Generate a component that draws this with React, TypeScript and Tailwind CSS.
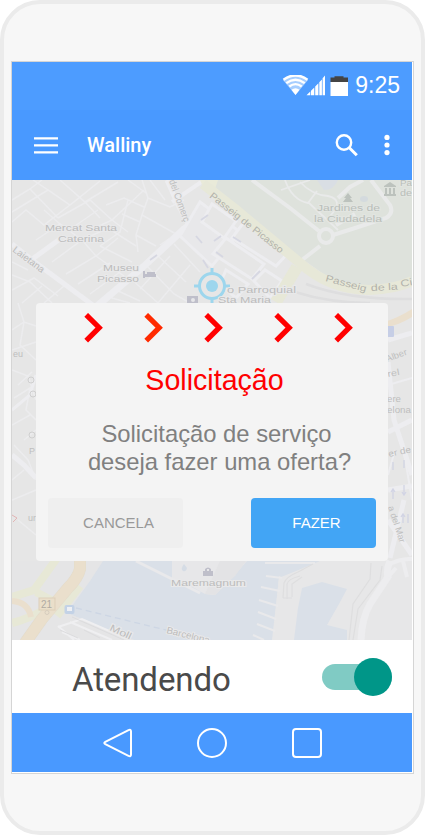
import React from "react";

const SANS = "font-['Liberation_Sans',Arial,sans-serif]";

type LabelProps = {
  x: number;
  y: number;
  w: number;
  children: string;
  angle?: number;
  size?: number;
};

function Label({ x, y, w, children, angle = 0, size = 9.6 }: LabelProps) {
  return (
    <text
      transform={`translate(${x} ${y}) rotate(${angle})`}
      textLength={w}
      lengthAdjust="spacingAndGlyphs"
      fontSize={size}
    >
      {children}
    </text>
  );
}

function CityMap() {
  return (
    <svg
      className="absolute inset-0 h-full w-full"
      viewBox="12 180 400 460"
      fontFamily="'Liberation Sans', Arial, sans-serif"
      fontSize="10"
    >
      <rect x="12" y="180" width="400" height="460" fill="#e6e6e6" />

      {/* old town side streets */}
      <g fill="none" stroke="#ececee" strokeWidth="1.5">
        <path d="M12 200L30 189L42 180M12 212L48 190L70 205L100 181M30 189L58 218M48 190L33 180M70 205L44 225L26 210L12 222M60 180L85 202L118 182M58 218L90 200L112 220L144 190M85 202L100 218M90 230L112 220L128 232" />
        <path d="M142 180L148 198L142 215L136 235L138 252M148 198L170 207L184 200M142 215L160 225L176 234M136 235L156 246M144 207L124 198L106 205M140 222L122 214M128 180L146 193M150 180L165 200M176 234L160 245M128 200L120 232L100 246" />
        <path d="M36 240L60 224L82 240L96 256L124 276M60 224L44 210M52 262L82 240L108 228L136 246M66 274L96 256L118 238M78 284L110 263M90 294L120 272M72 228L98 210M100 246L132 262" />
        <path d="M12 275L30 282L52 303M12 290L34 278L58 296M22 303L42 286M44 303L64 286M12 262L28 270" />
        <path d="M108 297L130 303M116 290L140 301M130 278L158 303M146 265L174 294L190 303M158 256L186 282M174 244L200 272M158 303L190 265M140 289L170 256" />
        <path d="M12 330L24 322L36 326M18 303L24 322L20 345L36 360M12 350L36 342M12 370L28 376L36 400M18 385L32 372M14 398L30 388L26 410L36 420M12 425L30 415M24 440L36 430M14 445L28 460L36 480M12 480L24 470M12 500L36 490M18 520L36 535" />
      </g>
      <g fill="none" stroke="#ededf0" strokeWidth="5">
        <path d="M12 244L32 260L94 306M31 260L60 239" />
        <path d="M97 306L143 267L184 229L213 209" strokeWidth="7" />
        <path d="M167 180L178 205L190 227L215 254" strokeWidth="5" />
        <path d="M172 202L204 180" strokeWidth="4" />
        <path d="M12 410L30 395L36 375" strokeWidth="3" />
        <path d="M12 455L24 465L36 478" />
      </g>

      {/* park */}
      <path d="M203 180H412V280C385 293 350 291 325 275L270 236L212 193Z" fill="#dee2dc" />
      <g fill="none" stroke="#e9eaea" strokeWidth="3">
        <path d="M252 180L290 208L319 231M302 260L320 246M333 235L352 229L386 218Q394 213 390 205L371 180M336 225L355 214M338 198L350 187L363 180" strokeWidth="4" />
        <path d="M285 180Q292 200 308 203L317 191M300 182Q312 195 328 196Q345 200 330 216M309 203L338 230M281 190L310 180" strokeWidth="1.8" />
        <circle cx="326" cy="236" r="7" strokeWidth="4" />
      </g>
      <path d="M317 180H338Q334 190 324 190Z" fill="#d9dee4" />
      <ellipse cx="364" cy="199" rx="4" ry="3" fill="#d4dade" />

      {/* eastern city blocks */}
      <g fill="#e6e6e6" stroke="#ededf0" strokeWidth="3">
        <path d="M200 202L240 232L212 266L180 236Z" fill="#e8e8ea" />
        <path d="M226 238L264 264L252 279L213 254Z" />
        <path d="M244 222L289 252L276 266L232 238Z" />
        <path d="M212 204L236 221L224 238L202 222Z" />
        <path d="M226 270L248 284L236 298L220 284Z" />
        <path d="M254 281L265 270L282 281L270 298Z" />
      </g>
      <g stroke="#d6d7e2" strokeWidth="1.8" fill="none">
        <path d="M150 260L157 255M201 220L208 215M196 236L202 243M203 260L208 268M216 252L223 257M233 237L241 242M252 279L260 271M214 241L221 236" />
      </g>
      <path d="M200 180H218L214 192L203 187Z" fill="#e9ead9" />
      <g fill="none" stroke="#e7e8d8">
        <path d="M203 184L235 209L300 263Q330 290 370 290Q396 289 412 281" strokeWidth="10" />
        <path d="M297 267L276 302" strokeWidth="12" />
      </g>
      <g fill="none" stroke="#dededf" strokeWidth="2.5">
        <path d="M295 292Q330 303 370 303M306 284Q348 300 412 299" />
      </g>

      {/* eastern edge */}
      <path d="M384 322Q398 318 412 309V317Q399 325 387 327Z" fill="#eadfcd" />
      <g stroke="#ededf0" strokeWidth="5" fill="none">
        <path d="M388 340L412 333M388 362L394 420L412 475M388 432L412 420M388 490L412 486M388 520L412 555M404 500L390 558" />
        <path d="M388 385L412 378M395 450L388 475M402 440L412 500" strokeWidth="2" />
      </g>
      <rect x="386" y="326" width="8" height="11" rx="1" fill="#c6cee6" />
      <g stroke="#d2d4e4" strokeWidth="1.3" fill="none">
        <path d="M393 462V470M404 460V468M393 489V499M391 492L393 489L395 492M404 485V495M402 492L404 495L406 492M403 514V523M408 514V523M401 517L403 514L405 517" />
      </g>

      {/* harbour */}
      <path d="M100 561H296L279 576L273 640H134L66 613Q74 600 80 590Z" fill="#dae0e8" />
      <path d="M172 561H247L233 577L215 595L205 594L187 584L172 580Z" fill="#e7e7e9" />
      <path d="M215 595L235 576L246 561H220L205 594Z" fill="#e3e3e5" />
      <path d="M136 561L200 593" stroke="#e9e9eb" strokeWidth="3" fill="none" />
      <path d="M296 561H412V640H272L279 578L296 568Z" fill="#e7e7e8" />
      <path d="M302 588L322 582L347 589L339 604L327 625L347 630V640H294L298 608Z" fill="#dae0e8" />
      <path d="M265 561H320L296 571L281 577L276 573Z" fill="#dae0e8" />
      <g stroke="#e9e9eb" strokeWidth="2" fill="none">
        <path d="M266 576L282 578M261 587L280 591M259 600L278 606M258 612L276 619M257 624L275 631M253 635L264 640M265 563H315" />
      </g>
      <g stroke="#dededf" strokeWidth="1.2" fill="none">
        <path d="M283 598L284 583Q286 577 298 572L313 564M287 599V584Q288 579 300 576M292 597V584L302 577M283 598H292M371 563L370 579L353 604L349 640M382 566L380 580L358 609L353 640" />
      </g>
      <g stroke="#ededef" fill="none">
        <path d="M390 561Q386 570 388 577L370 604Q362 618 361 640" strokeWidth="7" />
        <path d="M386 566Q400 558 412 559M403 561L407 577M388 577L396 568" strokeWidth="4" />
      </g>
      <path d="M12 561H103L90 581L67 613L134 640H12Z" fill="#e5e5e6" />
      <g fill="none">
        <path d="M60 554L34 590L12 597M36 592L51 600M12 623Q28 619 44 610L50 600M80 586L57 616" stroke="#e7e8d6" strokeWidth="8" />
        <path d="M12 601Q28 602 31 617" stroke="#eadfcd" strokeWidth="6" />
        <path d="M80 558V569Q78 578 68 588L42 619L25 643" stroke="#e3dccb" strokeWidth="12" />
        <path d="M80 558V569Q78 578 68 588L42 619L25 643" stroke="#eadfcc" strokeWidth="11" />
        <path d="M58 626L74 640M58 627L82 619L130 640M70 622L112 640M62 632L80 640" stroke="#efeff1" strokeWidth="2" />
        <path d="M60 630L78 638M72 617L124 640M84 630L100 638" stroke="#dcdcde" strokeWidth="1" />
        <path d="M76 608L170 631" stroke="#cdd6e4" strokeWidth="1.3" strokeDasharray="6 4" />
      </g>
      <rect x="39" y="598" width="16" height="12" fill="#eadfca" stroke="#ddcfb9" />
      <text x="41" y="608" fontSize="10" fill="#b0aba2">21</text>
      <circle cx="47" cy="612.5" r="2" fill="none" stroke="#d6cdbe" />
      <rect x="64.5" y="605" width="10" height="9" rx="2" fill="#c3d2e6" />
      <rect x="67" y="607" width="5" height="4" fill="#eef0f4" />

      {/* place markers */}
      <g fill="#bcc2bd">
        <path d="M348 193L352 198H350L353 202H343L346 198H344Z" />
        <path d="M384 186L390 182L396 186V187H384ZM385 188H387V194H385ZM389 188H391V194H389ZM393 188H395V194H393ZM384 194H396V196H384Z" />
      </g>
      <g fill="#bfbfca">
        <path d="M143 271H145V274H156V277H145V278H143ZM147 272H155V274H147Z" />
        <rect x="187" y="296" width="11" height="8" />
        <path d="M203 571H213V576H203ZM205 571V569Q208 566 211 569V571H209V569H207V571Z" />
        <path d="M184 564L187 568Q186 572 183 571Q180 569 184 564Z" fill="#d5dce5" />
      </g>
      <circle cx="193" cy="300" r="2" fill="#e7e7e9" />

      {/* current position */}
      <g stroke="#9dd6ed" fill="none" strokeWidth="3">
        <circle cx="212" cy="286" r="12.5" fill="#e6e6e6" />
        <path d="M212 268V274M212 298V305M194 286H200M224 286H230" />
        <circle cx="212" cy="286" r="6" fill="#9dd6ed" stroke="none" />
      </g>

      {/* labels */}
      <g fill="#bcbcbc" stroke="#e9e9ea" strokeWidth="2" paintOrder="stroke">
        <Label x={45} y={231} w={72}>Mercat Santa</Label>
        <Label x={58} y={242} w={46}>Caterina</Label>
        <Label x={103} y={271} w={36}>Museu</Label>
        <Label x={97} y={282} w={42}>Picasso</Label>
        <Label x={12} y={251} w={37} angle={37}>Laietana</Label>
        <Label x={169} y={181} w={44} angle={70}>del Comerç</Label>
        <Label x={227} y={293} w={69}>o Parroquial</Label>
        <Label x={218} y={303} w={53}>Sta Maria</Label>
        <Label x={171} y={585.5} w={75}>Maremagnum</Label>
        <Label x={109} y={630} w={23} angle={25}>Moll</Label>
        <Label x={166} y={633} w={44} angle={14}>Barcelona</Label>
      </g>
      <g fill="#b9beb9" stroke="#e2e5e1" strokeWidth="2" paintOrder="stroke">
        <Label x={317} y={210.5} w={63}>Jardines de</Label>
        <Label x={314} y={221.5} w={68}>la Ciudadela</Label>
        <Label x={400} y={186} w={12} size={9}>Pa</Label>
        <Label x={400} y={195.5} w={12} size={9}>de</Label>
      </g>
      <g fill="#b2b2ab">
        <Label x={209} y={197} w={91} angle={38.5}>Passeig de Picasso</Label>
        <Label x={325} y={281} w={42} angle={15}>Passeig</Label>
        <Label x={371} y={291} w={27} angle={-3}>de la</Label>
        <Label x={401} y={287} w={12} angle={-10}>Ci</Label>
      </g>
      <g fill="#bebebe">
        <Label x={387} y={362} w={22} angle={-20} size={9}>Alber</Label>
        <Label x={388} y={377} w={12} angle={-10} size={9}>rel</Label>
        <Label x={387} y={402} w={14} size={9}>ere</Label>
        <Label x={387} y={413} w={24} size={9}>elona</Label>
        <Label x={389} y={457} w={23} angle={-12} size={9}>er de</Label>
        <Label x={388} y={507} w={38} angle={72} size={9}>a del Mar</Label>
        <Label x={29} y={454} w={6} size={9}>P</Label>
        <Label x={28} y={521} w={8} size={9}>ur</Label>
        <Label x={13} y={357} w={10} size={9}>eu</Label>
      </g>
      <g fill="none" stroke="#cfcfcf" strokeWidth="1">
        <circle cx="31" cy="380" r="3" />
        <circle cx="33" cy="394" r="3" />
        <circle cx="32" cy="435" r="3" />
      </g>
      <path d="M12 515L17 518L13 522" fill="none" stroke="#e2b5b5" />
    </svg>
  );
}

function StatusBar() {
  return (
    <div className={`flex h-12 items-center justify-end bg-[#4d9cff] pr-3 text-white ${SANS}`}>
      <svg className="mr-[5px] h-[22px] w-[43px]" viewBox="282 74.5 43 22">
        <g fill="none" stroke="#fff" strokeWidth="2">
          <path d="M283.5 79.2Q295.5 70.8 307.5 79.2" strokeWidth="2.6" />
          <path d="M286.3 82.6Q295.5 75.8 304.7 82.6" strokeWidth="2.4" />
          <path d="M289.3 86Q295.5 81.3 301.7 86" strokeWidth="2.3" />
        </g>
        <path d="M291.5 89.3Q295.5 86 299.5 89.3L295.5 94.5Z" fill="#fff" />
        <path d="M283 79.5Q295.5 71 308 79.5L295.5 94.5Z" fill="#fff" fillOpacity="0.5" />
        <path d="M306.5 94.7L310.3 91V94.7ZM311 90.3L314.3 87V94.7H311ZM315.2 86L318.4 82.8V94.7H315.2ZM319.3 81.7L321.9 79V94.7H319.3ZM322.6 77.8L325 75V94.7H322.6Z" fill="#fff" />
      </svg>
      <svg className="mr-[7px] mb-px h-[20px] w-[18px]" viewBox="331 75 18 20">
        <path d="M331.5 76.5H335.5V75.3H344.5V76.5H349V81H331.5Z" fill="#444" />
        <path d="M331.5 81H349V95H331.5Z" fill="#fff" />
      </svg>
      <span className="pb-[2px] text-[23px] leading-none">9:25</span>
    </div>
  );
}

function AppBar() {
  return (
    <header className="flex h-[70px] items-center bg-[#4999ff] pr-[22px] pl-[22px] text-white">
      <svg className="mr-[29px] h-[18px] w-6" viewBox="0 0 24 18" fill="#fff">
        <path d="M0 1.2H24V3.6H0ZM0 8.2H24V10.6H0ZM0 15.2H24V17.6H0Z" />
      </svg>
      <h1 className="grow font-[Roboto,sans-serif] text-[20px] leading-6 font-medium">Walliny</h1>
      <svg className="mr-[26px] h-[23px] w-[23px]" viewBox="335 133.5 23 23" fill="none" stroke="#fff" strokeWidth="2.4">
        <circle cx="344" cy="142" r="7.2" />
        <path d="M349.3 147.3L356.8 154.8" strokeWidth="3" />
      </svg>
      <svg className="h-[22px] w-[6px]" viewBox="0 0 6 22" fill="#fff">
        <circle cx="3" cy="3.4" r="2.6" />
        <circle cx="3" cy="11" r="2.6" />
        <circle cx="3" cy="18.6" r="2.6" />
      </svg>
    </header>
  );
}

function Chevron({ className }: { className: string }) {
  return (
    <svg className={`h-[30px] w-[19px] ${className}`} viewBox="0 0 19 30" fill="none" stroke="currentColor" strokeWidth="5.2">
      <path d="M2.2 1.8L15.2 14.7L2.2 27.6" />
    </svg>
  );
}

function RequestDialog() {
  return (
    <section className={`relative mx-6 mt-[123px] flex h-[258px] flex-col rounded bg-[#f4f4f4] ${SANS}`}>
      <div className="mt-[10px] flex h-[30px] pl-12 text-[#ff0000]">
        <Chevron className="mr-[41px]" />
        <Chevron className="mr-[41px] text-[#ff2a00]" />
        <Chevron className="mr-[51px]" />
        <Chevron className="mr-[41px]" />
        <Chevron className="" />
      </div>
      <h2 className="mt-[21px] pl-[5px] text-center text-[28.6px] leading-8 text-[#ff0000]">Solicitação</h2>
      <p className="mt-[24px] pl-4 text-center text-[23.8px] leading-7 text-[#808080]">
        <span className="block pr-[7px]">Solicitação de serviço</span>
        <span className="block pr-px">deseja fazer uma oferta?</span>
      </p>
      <div className="mt-[22px] flex h-[50px] justify-between px-3">
        <button className="w-[135px] rounded bg-[#efefef] pt-px pl-[6px] text-[15px] text-[#999]">CANCELA</button>
        <button className="w-[125px] rounded bg-[#42a5f5] pt-px pl-[6px] text-[15px] text-white">FAZER</button>
      </div>
    </section>
  );
}

export default function App() {
  return (
    <div className="h-[835px] w-[425px] rounded-[40px] border-4 border-[#ebebeb] bg-[#f7f7f7] px-[7px] pt-[57px]">
      <div className="flex h-[713px] w-[403px] flex-col border border-[#d5d5d5] bg-white pr-px pb-px">
        <StatusBar />
        <AppBar />
        <main className="relative flex h-[460px] flex-col overflow-hidden">
          <CityMap />
          <RequestDialog />
        </main>
        <div className="flex h-[73px] items-center justify-between bg-white pr-5 pl-[60px]">
          <span className="pt-[7px] font-[Roboto,sans-serif] text-[33px] leading-10 tracking-[-0.1px] text-[#4a4a4a]">Atendendo</span>
          <button className="flex h-[26px] w-[70px] items-center justify-end rounded-full bg-[#80cbc4]" role="switch" aria-checked="true">
            <i className="h-[38px] w-[38px] rounded-full bg-[#009688]" />
          </button>
        </div>
        <nav className="flex h-[59px] items-center bg-[#4999ff] pl-[91px]">
          <svg className="mr-[64px] h-[30px] w-[30px]" viewBox="0 0 30 30" fill="none" stroke="#fff" strokeWidth="2">
            <path d="M2.3 13.8L25.5 2.2Q28 1.1 28 3.5V26.5Q28 29 25.5 27.8L2.3 16.2Q0.3 15 2.3 13.8Z" />
          </svg>
          <svg className="mr-[65px] h-[30px] w-[30px]" viewBox="0 0 30 30" fill="none" stroke="#fff" strokeWidth="2">
            <circle cx="15" cy="15" r="14" />
          </svg>
          <svg className="h-[30px] w-[30px]" viewBox="0 0 30 30" fill="none" stroke="#fff" strokeWidth="2">
            <rect x="1" y="1" width="28" height="28" rx="3" />
          </svg>
        </nav>
      </div>
    </div>
  );
}
